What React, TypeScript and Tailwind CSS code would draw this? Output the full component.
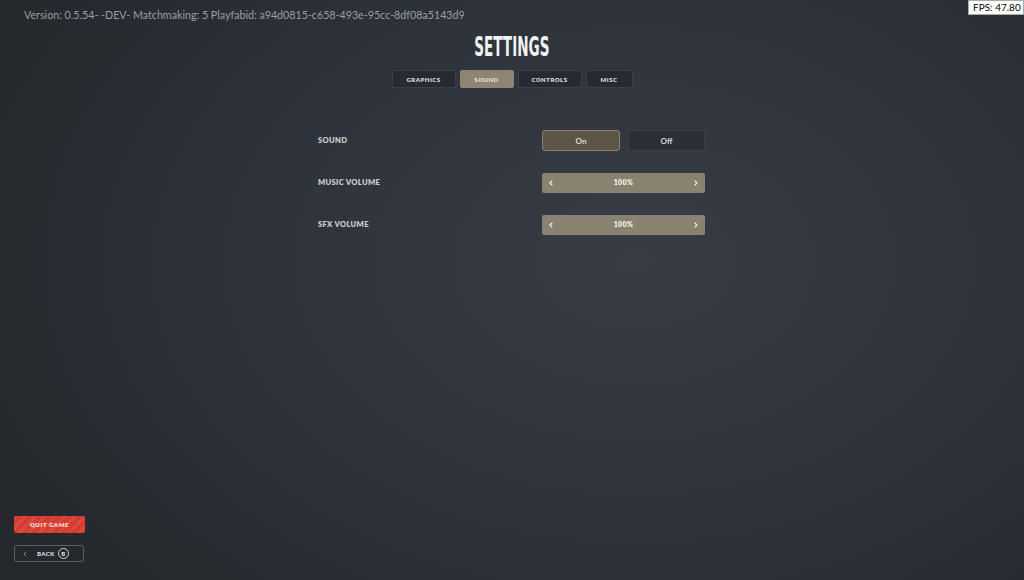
import { ChevronLeft, ChevronRight } from "lucide-react";

const tabs = ["GRAPHICS", "SOUND", "CONTROLS", "MISC"];

function Tab({ label, active }: { label: string; active?: boolean }) {
  return (
    <button
      className={
        "h-[18px] rounded-[2px] border text-[6px] font-extrabold tracking-[0.08em] " +
        (active
          ? "border-[#8d8471] bg-[#8d8471] text-[#e6e1d6]"
          : "border-[#3b4048] bg-[#272b31] text-[#d9dade]")
      }
    >
      {label}
    </button>
  );
}

function Stepper({ value }: { value: string }) {
  return (
    <div className="flex h-[20px] w-[163px] items-center justify-between rounded-[2px] bg-[#8a8270] px-[5px] text-[#f3f0ea]">
      <ChevronLeft size={8} strokeWidth={3.5} />
      <span className="text-[7px] font-extrabold tracking-[0.06em]">{value}</span>
      <ChevronRight size={8} strokeWidth={3.5} />
    </div>
  );
}

function Row({ label, children }: { label: string; children: React.ReactNode }) {
  return (
    <div className="flex h-[21px] items-center justify-between">
      <span className="text-[7.6px] font-extrabold tracking-[0.04em] text-[#c9cace]">{label}</span>
      {children}
    </div>
  );
}

export default function App() {
  return (
    <div
      className="relative flex h-[580px] w-full flex-col overflow-hidden bg-[radial-gradient(ellipse_70%_85%_at_62%_45%,#383d45_0%,#30353d_45%,#25282d_100%)]"
      style={{ fontFamily: "Lato, 'Open Sans', sans-serif" }}
    >
      {/* build info */}
      <div className="pl-[24px] pt-[6px] text-[10.7px] leading-[18px] text-[#9b9ea3]">
        Version: 0.5.54- -DEV- Matchmaking: 5 Playfabid: a94d0815-c658-493e-95cc-8df08a5143d9
      </div>

      {/* fps counter */}
      <div className="absolute right-0 top-0 flex h-[15px] w-[56px] items-center overflow-hidden whitespace-nowrap border border-[#aaa] bg-white pl-[4px] text-[10px] text-black">
        FPS: 47.80
      </div>

      <h1
        className="mt-[10px] self-center text-[26px] font-bold leading-[26px] text-[#f2f2f2]"
        style={{ fontFamily: "'Liberation Sans Narrow', 'DejaVu Sans Condensed', sans-serif", transform: "scaleX(0.58)" }}
      >
        SETTINGS
      </h1>

      <div className="mt-[10px] grid grid-cols-[64px_54px_64px_47px] gap-[4px] self-center">
        {tabs.map((t) => (
          <Tab key={t} label={t} active={t === "SOUND"} />
        ))}
      </div>

      <div className="ml-[318px] mt-[42px] flex w-[387px] flex-col gap-[21px]">
        <Row label="SOUND">
          <div className="flex gap-[8px]">
            <button className="h-[21px] w-[78px] rounded-[3px] border border-[#8c816b] bg-[#5d5648] text-[8px] font-bold text-[#ddd8cc]">
              On
            </button>
            <button className="h-[21px] w-[77px] rounded-[2px] border border-[#3a3f47] bg-[#2b2f36] text-[8px] font-bold text-[#d7d8db]">
              Off
            </button>
          </div>
        </Row>
        <Row label="MUSIC VOLUME">
          <Stepper value="100%" />
        </Row>
        <Row label="SFX VOLUME">
          <Stepper value="100%" />
        </Row>
      </div>

      <div className="mt-auto mb-[18px] ml-[14px] flex flex-col gap-[12px]">
        <button className="h-[17px] w-[71px] rounded-[2px] bg-[#d63b2f] bg-[repeating-linear-gradient(135deg,rgba(255,255,255,0.07)_0px,rgba(255,255,255,0.07)_3px,transparent_3px,transparent_7px)] text-[6px] font-extrabold tracking-[0.1em] text-[#f6e4e1]">
          QUIT GAME
        </button>
        <button className="flex h-[17px] w-[70px] items-center rounded-[3px] border border-[#5b6067] pl-[6px] text-[#d3d4d7]">
          <ChevronLeft size={8} strokeWidth={2.5} className="text-[#9a9da2]" />
          <span className="ml-[8px] text-[6px] font-extrabold tracking-[0.06em]">BACK</span>
          <span className="ml-[3px] flex h-[11px] w-[11px] items-center justify-center rounded-full border border-[#d3d4d7] text-[6px] font-extrabold">
            B
          </span>
        </button>
      </div>
    </div>
  );
}
